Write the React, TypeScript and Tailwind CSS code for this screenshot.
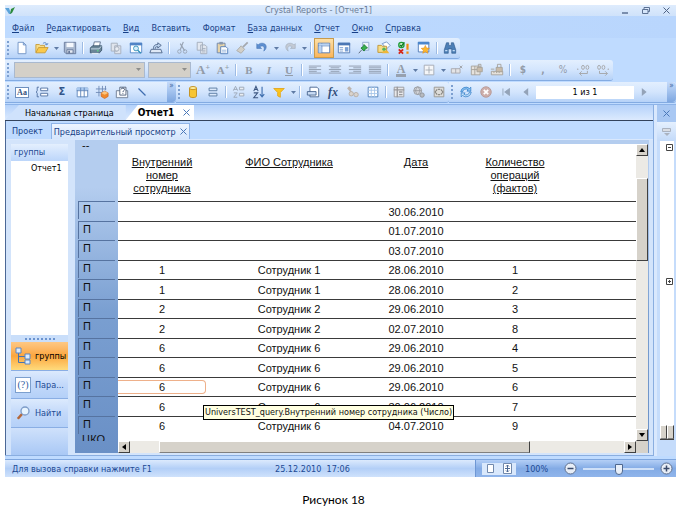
import { ReactNode } from 'react';

const MENU = ['Файл', 'Редактировать', 'Вид', 'Вставить', 'Формат', 'База данных', 'Отчет', 'Окно', 'Справка'];

const ROWS: string[][] = [
  ['', '', '30.06.2010', ''],
  ['', '', '01.07.2010', ''],
  ['', '', '03.07.2010', ''],
  ['1', 'Сотрудник 1', '28.06.2010', '1'],
  ['1', 'Сотрудник 1', '28.06.2010', '2'],
  ['2', 'Сотрудник 2', '29.06.2010', '3'],
  ['2', 'Сотрудник 2', '02.07.2010', '8'],
  ['6', 'Сотрудник 6', '29.06.2010', '4'],
  ['6', 'Сотрудник 6', '29.06.2010', '5'],
  ['6', 'Сотрудник 6', '29.06.2010', '6'],
  ['6', 'Сотрудник 6', '30.06.2010', '7'],
  ['6', 'Сотрудник 6', '04.07.2010', '9'],
];
const SELECTED_ROW = 9;
const TOOLTIP_ROW = 10;

const page = <path d="M3.5 1.5h6l3 3v10h-9z M9.5 1.5v3h3" fill="#fff" stroke="#6a8fc4" />;
const lines = (widths: number[][], color: string) =>
  widths.map(([x, w], i) => <path key={i} d={`M${x} ${3.5 + i * 2}h${w}`} stroke={color} />);

const ICONS: Record<string, ReactNode> = {
  new: page,
  open: <><path d="M1 13V4h4l1 1h5v3" fill="#f7dc86" stroke="#c79a35" /><path d="M1 13.5L4 7.500h11l-3.500 6z" fill="#fbc94b" stroke="#c79a35" /><path d="M9 3c2-2 4-1 4.500 1M14.800 2.500l-1.200 2-2-1" fill="none" stroke="#4a7cc0" /></>,
  save: <><path d="M1.500 1.500h13v13h-11l-2-2z" fill="#a9b8cf" stroke="#66789a" /><path d="M4 2h8v5H4z" fill="#f5f8fd" /><path d="M4.500 10h7v4h-7z" fill="#e5eaf2" stroke="#66789a" /><path d="M6 11h2v3H6z" fill="#66789a" /></>,
  print: <><path d="M5 6l1-5h7l-1 5" fill="#fff" stroke="#5a6e8c" /><path d="M1.500 8l2.500-2.500h10.500v5L12 13.500H1.500z" fill="#6a8698" stroke="#39536c" /><path d="M2 9h9.500l2.500-3" stroke="#cfe0ee" fill="none" /><path d="M3 13.500h8v1.500H3z" fill="#dfe9f3" /><circle cx="10" cy="11" r="1" fill="#5fd08a" /></>,
  setup: <><path d="M2.500 2.500h7v9h-7z M6.500 5.500h7v9h-7z" fill="#dfe4ec" stroke="#a4adba" /><circle cx="9" cy="9" r="2.500" fill="#e9edf3" stroke="#a4adba" /></>,
  preview: <><path d="M1.500 2.500h13v11h-13z" fill="#fff" stroke="#4f83c6" /><path d="M1 2h14v3H1z" fill="#4f83c6" /><circle cx="8" cy="8.500" r="2.800" fill="#d7eefc" stroke="#2f8fb8" /><path d="M10 10.500l3.500 3.500" stroke="#2f8fb8" strokeWidth="1.500" /></>,
  export: <><path d="M2.500 9.500h11l1.500 4H1z" fill="#dfe9f6" stroke="#4a6288" /><path d="M5 9c0-4 2-5 5-5V2l4 3-4 3V6.500c-2 0-3 .5-3 2.500" fill="#bcd3ee" stroke="#4a6288" /></>,
  cut: <><path d="M9.500 1L6 10M6 3l5 8" stroke="#97a2b2" strokeWidth="1.300" /><circle cx="5" cy="12" r="2" fill="none" stroke="#97a2b2" /><circle cx="11.500" cy="12" r="2" fill="none" stroke="#97a2b2" /></>,
  copy: <path d="M2.500 1.500h6v9h-6z M6.500 4.500h5l2 2v8h-7z M8 8.500h4M8 10.500h4M8 12.500h4" fill="#e3e8f0" stroke="#a1acba" />,
  paste: <><path d="M2.500 2.500h9v11h-9z" fill="#e6d3a8" stroke="#6b84ab" /><path d="M5 1h4v3H5z" fill="#8797ae" /><path d="M6.500 6.500h6l2 2v6h-8z" fill="#fff" stroke="#4d79b7" /><path d="M8 10.500h5M8 12.500h5" stroke="#8fb0da" /></>,
  brush: <><path d="M14.500 1.500L9 7" stroke="#a4a8ae" strokeWidth="2" /><path d="M7 5.500l4 4-4 4.500-5-3z" fill="#d2cfc8" stroke="#a9a9a6" /></>,
  undo: <path d="M2 3v5.500h5.500L5.500 6.700c3-2.400 6.500-.2 4.500 4.800 4.500-3 3.500-9-2-9-2 0-3.300.8-4.500 2z" fill="#5e8fd0" stroke="#3f70b3" strokeWidth=".6" />,
  redo: <path d="M14 3v5.500H8.500l2-1.800c-3-2.400-6.500-.2-4.500 4.800-4.500-3-3.500-9 2-9 2 0 3.300.8 4.500 2z" fill="#c3cad5" stroke="#9ba6b5" strokeWidth=".6" />,
  design: <><path d="M1.500 2.500h13v11h-13z" fill="#fff" stroke="#4b76b4" /><path d="M1.500 5.500h13M5.500 2.500v11" stroke="#4b76b4" /><path d="M2 3h12v2H2zM2 6h3v7H2z" fill="#b9d3f3" /></>,
  form: <><path d="M1.500 2.500h13v11h-13z" fill="#fff" stroke="#4b76b4" /><path d="M1 2h14v3H1z" fill="#4b76b4" /><path d="M3 7.500h4M3 9.500h4M3 11.500h4" stroke="#7ba0d4" /><path d="M9 7h4v5H9z" fill="#7ba0d4" /></>,
  pin: <><path d="M6.500 1.500h7v9h-7z" fill="#eef4fb" stroke="#8aa6cc" /><path d="M8 4l4 4-2 .5-2 3-3.500-3.500L7.500 6z" fill="#36b24c" stroke="#1d7a31" /><path d="M5.500 10L2 14" stroke="#55606f" /></>,
  group: <><path d="M6 3l5-2 4 4-4 4z" fill="#fff" stroke="#6a8fc4" /><path d="M1 5h4l1 1h5v7H1z" fill="#f6dc84" stroke="#bf9430" /><circle cx="8" cy="9.500" r="2" fill="#56b45c" /><path d="M6 14h8l-2-3H7z" fill="#efb738" /></>,
  check: <><path d="M5 1.500a3 3 0 110 6 3 3 0 010-6z" fill="#d7f3d6" stroke="#1c9b36" strokeWidth="1.500" /><path d="M3.500 4.500L5 6l3.500-4.500" fill="none" stroke="#0f7a25" strokeWidth="1.500" /><path d="M2 9.500l5 5M7 9.500l-5 5" stroke="#d4281c" strokeWidth="2" /><path d="M12 3v7M12 12v2.500" stroke="#ef8c12" strokeWidth="2.500" /></>,
  star: <><path d="M1.500 1.500h12v11h-12z" fill="#fff" stroke="#4b76b4" /><path d="M1 1h13v3H1z" fill="#4b86cc" /><path d="M9.500 5l1.400 3 3.300.4-2.400 2.200.6 3.400-2.900-1.600L6.600 14l.6-3.400L4.800 8.400 8.100 8z" fill="#fdb72d" stroke="#e08710" strokeWidth=".6" /></>,
  find: <><path d="M4 2h2.500v3h3V2H12l2.500 8v4H10V9H6v5H1.500v-4z" fill="#4d7fb6" stroke="#2b5688" strokeWidth=".7" /><path d="M2.500 11h2.500M11 11h2.500" stroke="#c3dcf5" strokeWidth="1.500" /></>,
  alignLeft: lines([[1, 14], [1, 9], [1, 14], [1, 9], [1, 14]], '#8b97a8'),
  alignCenter: lines([[1, 14], [3, 10], [1, 14], [3, 10], [1, 14]], '#8b97a8'),
  alignRight: lines([[1, 14], [6, 9], [1, 14], [6, 9], [1, 14]], '#8b97a8'),
  justify: lines([[1, 14], [1, 14], [1, 14], [1, 14], [1, 14]], '#8b97a8'),
  border: <><path d="M2.500 2.500h11v11h-11z" fill="#f5f6f8" stroke="#a2a8b1" /><path d="M8 4v8M4 8h8" stroke="#a2a8b1" /></>,
  suppress: <><path d="M1.500 6.500h10v5h-10z M6.500 6.500v5" fill="#e4e4e6" stroke="#a6a6aa" /><path d="M11 3l3 3M14 3l-3 3" stroke="#9a9a9e" /></>,
  lock: <><path d="M1.500 3.500h10v10h-10z M1.500 7.500h10M5.500 3.500v10" fill="#e6e2dc" stroke="#a5a098" /><path d="M8 5h6v5H8z" fill="#c9bba9" stroke="#a5a098" /><path d="M9.500 5V1.500h3V5" fill="none" stroke="#a5a098" /></>,
  lockSize: <><path d="M1.500 9.500h13v4h-13z M4.500 9.500v2M7.500 9.500v2M10.500 9.500v2" fill="#e6e2dc" stroke="#a5a098" /><path d="M7 5h7v5H7z" fill="#c9bba9" stroke="#a5a098" /><path d="M8.500 5V1.500h4V5M1 7h4" fill="none" stroke="#a5a098" /></>,
  incDec: <><circle cx="2" cy="7" r=".8" fill="#a2a2a4" /><ellipse cx="8" cy="5" rx="1.600" ry="2.300" stroke="#a2a2a4" /><ellipse cx="13" cy="5" rx="1.600" ry="2.300" stroke="#a2a2a4" /><path d="M4 12h9M6.500 9.500L4 12l2.500 2.500M13 9v3" stroke="#a2a2a4" /></>,
  decDec: <><circle cx="14" cy="7" r=".8" fill="#a2a2a4" /><ellipse cx="3.500" cy="5" rx="1.600" ry="2.300" stroke="#a2a2a4" /><ellipse cx="8.500" cy="5" rx="1.600" ry="2.300" stroke="#a2a2a4" /><path d="M4 12h9M10.500 9.500L13 12l-2.500 2.500M4 9v3" stroke="#a2a2a4" /></>,
  section: <><path d="M6.500 3.500h8v3h-8z M6.500 9.500h8v3h-8z" fill="#fff" stroke="#4a6c9e" /><path d="M4.500 2.500h-2v4l-1 1.500 1 1.500v4h2" fill="none" stroke="#4a6c9e" /></>,
  crosstab: <><path d="M2.500 3.500h12v10h-12z" fill="#fff" stroke="#5a82b8" /><path d="M2 3h13v3H2z" fill="#a9c8ee" /><path d="M6.500 3v11M10.500 3v11M2 6.500h13" stroke="#5a82b8" /></>,
  olap: <><path d="M1 4.500h12M1 8.500h12M4.500 1v12M8.500 1v12M12 1v5" stroke="#6c87b4" /><path d="M7 9l4-2 4 2v4l-4 2.500L7 13z" fill="#f08a2c" stroke="#c8611a" strokeWidth=".7" /><path d="M7 9l4 2 4-2-4-2z" fill="#fbc47c" /></>,
  subreport: <><path d="M1.500 6.500h13v8h-13z" fill="#f5f8fc" stroke="#69788f" /><path d="M5.500 2.500h7v9h-7z" fill="#fff" stroke="#4b5c76" /><path d="M7 5c0-2 4-2 4 0 0 1.500-2 1.500-2 3M9 9v1" stroke="#2f4262" fill="none" /></>,
  line: <path d="M4 4l8 8" stroke="#3f6db0" strokeWidth="1.500" />,
  db: <><path d="M4 3.500v9c0 2.500 8 2.500 8 0v-9" fill="#f7c533" stroke="#c08a16" /><ellipse cx="8" cy="3.500" rx="4" ry="1.800" fill="#fdec9e" stroke="#c08a16" /></>,
  bands: <path d="M3.500 3.500h9v3h-9z M3.500 9.500h9v3h-9z" fill="#dce9fa" stroke="#55779f" />,
  refresh: <><path d="M2 8a6 6 0 0110-4l1.500-1.500V7H9l1.500-1.500A4 4 0 004 8z" fill="#8bc4f2" stroke="#2d78c4" strokeWidth=".8" /><path d="M14 8a6 6 0 01-10 4l-1.500 1.500V9H7l-1.500 1.500A4 4 0 0012 8z" fill="#c3e2fa" stroke="#2d78c4" strokeWidth=".8" /></>,
  stop: <><circle cx="8" cy="8" r="6" fill="#cdaeaa" stroke="#b59793" /><path d="M5.500 5.500l5 5M10.500 5.500l-5 5" stroke="#fff" strokeWidth="2" /></>,
  first: <path d="M4.500 4v8M12 4L6.500 8l5.500 4z" fill="#94a3b8" stroke="#94a3b8" />,
  prev: <path d="M10.500 3.500L5 8l5.500 4.500z" fill="#94a3b8" />,
  next: <path d="M5.500 3.500L11 8l-5.500 4.500z" fill="#94a3b8" />,
  groupSort: <><path d="M1.500 6.500L4 1.500l2.500 5M2 5h4M2 9h4l-4 5h4" stroke="#9aa5b4" fill="none" /><path d="M8.500 2.500h5v3h-5z M8.500 9.500h5v3h-5z" fill="#e9edf2" stroke="#9aa5b4" /></>,
  sort: <><path d="M2 7l2.500-5.500L7 7M3 5h3.500M2 9h4.500L2 14.500h5" stroke="#3c5680" fill="none" strokeWidth="1.200" /><path d="M11.500 2v11M9 10.500l2.500 3 2.500-3" stroke="#3f6fae" fill="none" strokeWidth="1.300" /></>,
  filter: <path d="M2 4h12l-4.500 4.500V14l-3-1.500v-4z" fill="#fcc51d" stroke="#e0a51c" />,
  template: <><path d="M4.500 2.500h8l2 2v9h-10z" fill="#fff" stroke="#44618d" /><path d="M1.500 7.500h10v4h-10z" fill="#cadcf4" stroke="#44618d" /></>,
  highlight: <><path d="M2 3l4 5M3 2l3 3" stroke="#bdb4ad" strokeWidth="2" /><circle cx="6" cy="10" r="2.500" fill="#d9d3cd" stroke="#b3aca5" /><circle cx="11.500" cy="11" r="2.500" fill="#d9d3cd" stroke="#b3aca5" /></>,
  chart: <><path d="M2.500 2.500h11v11h-11z" fill="#fff" stroke="#4778b5" /><path d="M2 6h12M2 9.800h12M6 2v12M9.800 2v12" stroke="#a2c4e8" /></>,
  grid: <><path d="M2.500 2.500h11v11h-11z" fill="#e8e8ea" stroke="#98989c" /><path d="M2 5.500h12M6 2v12M8 8h4M8 11h4" stroke="#98989c" strokeWidth="1.500" /></>,
  globe: <><circle cx="6.500" cy="6.500" r="4.500" fill="#d4d6da" stroke="#96999f" /><path d="M2 6.500h9M6.500 2c-3 3-3 6 0 9 3-3 3-6 0-9" stroke="#96999f" fill="none" /><circle cx="11.500" cy="11.500" r="2.500" fill="#b7babf" stroke="#8d9096" /></>,
  map: <><path d="M2.500 2.500h11v11h-11z" fill="#dddcd9" stroke="#97958f" /><path d="M6 5L3.500 8 6 11M10 5l2.500 3L10 11M7 5h2M7 11h2" stroke="#85837e" fill="none" strokeWidth="1.200" /></>,
};

function Icon({ name }: { name: string }) {
  return <svg viewBox="0 0 16 16" fill="none" className="size-[14px]" aria-hidden="true">{ICONS[name]}</svg>;
}

const GLYPHS: Record<string, ReactNode> = {
  grow: <span className="font-['Liberation_Serif',serif] text-[13px] font-bold">A<sup className="text-[8px]">+</sup></span>,
  shrink: <span className="font-['Liberation_Serif',serif] text-[11px] font-bold">A<sup className="text-[8px]">+</sup></span>,
  bold: <b className="font-['Liberation_Serif',serif] text-[11px]">B</b>,
  italic: <i className="font-['Liberation_Serif',serif] text-[11px] font-bold">I</i>,
  underline: <u className="font-['Liberation_Serif',serif] text-[11px] font-bold">U</u>,
  color: <span className="border-b-[3px] border-[#97a1b0] px-px font-['Liberation_Serif',serif] text-[12px] leading-[10px] font-bold">A</span>,
  dollar: <b className="text-[10px]">$</b>,
  comma: <b className="text-[10px]">,</b>,
  percent: <span className="text-[10px]">%</span>,
  text: <span className="border border-[#6d8fbe] bg-white px-px font-['Liberation_Serif',serif] text-[8px] leading-[9px] font-bold text-[#33507c]">Aa</span>,
  sum: <b className="text-[11px] text-[#33558a]">Σ</b>,
  fx: <i className="font-['Liberation_Serif',serif] text-[12px] font-bold text-[#33507c]">fx</i>,
};

function Tools({ items }: { items: string[] }) {
  return (
    <>
      {items.map((item, i) => {
        if (item === '|') return <span key={i} className="mx-[2px] h-3 w-[2px] shrink-0 border-r border-white bg-[#9dbbe4]" />;
        if (item === 'v') {
          return (
            <button key={i} aria-label="Список" className="flex h-5 w-2 shrink-0 items-center justify-center">
              <svg viewBox="0 0 5 3" className="w-[5px]"><path d="M0 0h5L2.500 3z" fill="#5f7ba5" /></svg>
            </button>
          );
        }
        return (
          <button key={i} aria-label={item}
            className={`flex size-5 shrink-0 items-center justify-center text-[#929ba8] ${item === 'design' ? 'border border-[#c89b4d] bg-gradient-to-b from-[#fde0a6] to-[#fbb55a]' : ''}`}>
            {GLYPHS[item] ?? <Icon name={item} />}
          </button>
        );
      })}
    </>
  );
}

function Grip() {
  return <span className="mr-[3px] ml-[2px] h-[14px] w-[2px] shrink-0 border-l-2 border-dotted border-[#7c9fd0]" />;
}

function Overflow() {
  return (
    <span className="flex h-full w-[9px] shrink-0 items-start justify-center rounded-r-sm bg-gradient-to-b from-[#c4dafa] to-[#7ea7e0] text-[8px] leading-[8px] text-[#3d64a0]">»</span>
  );
}

const BAR = 'flex h-[21px] items-center rounded-r-[3px] border-b border-[#83abe2] bg-gradient-to-b from-[#e3effe] via-[#d3e5fd] to-[#b6d2f8]';
const SCROLL_BTN = 'flex size-3 shrink-0 items-center justify-center border border-t-white border-l-white border-r-[#404040] border-b-[#404040] bg-[#d6d2ca]';

function Toolbars() {
  return (
    <div className="flex flex-col items-start gap-px pb-px">
      <div className={BAR}>
        <Grip />
        <Tools items={['new', 'open', 'v', 'save', '|', 'print', 'setup', 'preview', 'export', '|', 'cut', 'copy', 'paste', 'brush', 'undo', 'v', 'redo', 'v', '|', 'design', 'form', 'pin', 'group', 'check', 'star', '|', 'find']} />
      </div>
      <div className={BAR}>
        <Grip />
        <div className="flex gap-[3px] px-[2px]">
          <FontSelect label="Шрифт" className="w-[131px]" />
          <FontSelect label="Размер" className="w-[43px]" />
        </div>
        <Tools items={['grow', 'shrink', '|', 'bold', 'italic', 'underline', '|', 'alignLeft', 'alignCenter', 'alignRight', 'justify', '|', 'color', 'v', 'border', 'v', 'suppress', 'lock', 'lockSize', '|', 'dollar', 'comma', 'percent', 'incDec', 'decDec']} />
      </div>
      <div className="flex w-full">
        <div className={`${BAR} w-[171px]`}>
          <Grip />
          <Tools items={['text', 'section', 'sum', 'crosstab', 'olap', 'subreport', 'line']} />
          <span className="flex-1" />
          <Overflow />
        </div>
        <div className={BAR}>
          <Grip />
          <Tools items={['db', 'bands', '|', 'groupSort', 'sort', 'filter', 'v', '|', 'template', 'fx', 'highlight', 'chart', '|', 'grid', 'globe', 'map']} />
        </div>
        <div className={`${BAR} flex-1`}>
          <Grip />
          <Tools items={['refresh', 'stop', 'first', 'prev']} />
          <input aria-label="Страница" defaultValue="1 из 1" className="h-[13px] w-[98px] bg-white text-center text-[9px] text-black" />
          <Tools items={['next']} />
          <span className="flex-1" />
          <Overflow />
        </div>
      </div>
    </div>
  );
}

function FontSelect({ label, className }: { label: string; className: string }) {
  return (
    <div className={`relative ${className}`}>
      <select aria-label={label} disabled className="block h-4 w-full appearance-none border border-[#a9b9cf] bg-[#d4d0c8] opacity-100" />
      <svg viewBox="0 0 5 3" className="absolute top-[6px] right-1 w-[5px]"><path d="M0 0h5L2.500 3z" fill="#8d8d8a" /></svg>
    </div>
  );
}

function Sidebar() {
  return (
    <aside className="mt-1 flex w-[57px] shrink-0 flex-col">
      <div className="flex flex-1 flex-col bg-white">
        <div className="h-[17px] bg-gradient-to-b from-[#e4effe] to-[#bcd6fa] pl-[3px] leading-[17px] text-[#1d4a94]">группы</div>
        <div className="pl-5 leading-[14px] text-black">Отчет1</div>
      </div>
      <div className="flex h-[7px] items-center justify-center bg-[#c9defa]">
        <span className="w-[30px] border-t-2 border-dotted border-[#6b93cf]" />
      </div>
      <button className="flex h-[29px] items-center gap-1 border-b border-[#8aaee4] bg-gradient-to-b from-[#fdc884] via-[#fba63c] to-[#fedb7c] pl-1 text-black">
        <svg viewBox="0 0 16 18" className="w-4 shrink-0">
          <path d="M3.500 5v10.500h7M3.500 9.500h7" stroke="#4a73ad" fill="none" />
          <path d="M1 1h5v5H1zM10 7h5v5h-5zM10 13h5v4h-5z" fill="#dcebfc" stroke="#5b86c2" />
        </svg>
        группы
      </button>
      <button className="flex h-7 items-center gap-1 border-b border-[#8aaee4] bg-gradient-to-b from-[#dceafd] via-[#c3d9fa] to-[#b4d0f8] pl-1 text-[#1d4a94]">
        <span className="flex size-4 shrink-0 items-center justify-center border border-[#7c9fce] bg-white font-['Liberation_Serif',serif] text-[10px] text-[#2d5d9f]">(?)</span>
        Пара...
      </button>
      <button className="flex h-[29px] items-center gap-1 border-b border-[#8aaee4] bg-gradient-to-b from-[#dceafd] via-[#c3d9fa] to-[#b4d0f8] pl-1 text-[#1d4a94]">
        <svg viewBox="0 0 16 16" className="w-4 shrink-0">
          <path d="M7 9l-3.500 4" stroke="#b5683a" strokeWidth="2.500" strokeLinecap="round" />
          <circle cx="10" cy="6" r="4" fill="#e7f4ff" stroke="#7d9cc8" strokeWidth="1.300" />
        </svg>
        Найти
      </button>
      <div className="h-[27px] bg-gradient-to-b from-[#cfe1fb] to-[#a9c8f5]" />
    </aside>
  );
}

function Report() {
  return (
    <div className="mb-[2px] flex min-w-0 flex-1 flex-col bg-gradient-to-b from-[#b4cdef] from-15% via-[#7a9fd1] via-55% to-[#6a90c6] pt-1">
      <div className="flex pr-px">
        <table className="w-full table-fixed border-separate border-spacing-0 text-center font-['Liberation_Sans',sans-serif] text-[11px] leading-[13px] text-[#111]">
          <colgroup>
            <col className="w-[43px]" />
            <col className="w-[88px]" />
            <col className="w-[166px]" />
            <col className="w-[88px]" />
            <col className="w-[110px]" />
            <col />
          </colgroup>
          <thead>
            <tr className="h-[57px] align-top">
              <td className="p-0 pl-[7px] text-left leading-[3px]">--</td>
              <th className="bg-white px-1 pt-3 font-normal underline">Внутренний номер сотрудника</th>
              <th className="bg-white pt-3 font-normal underline">ФИО Сотрудника</th>
              <th className="bg-white pt-3 font-normal underline">Дата</th>
              <th className="bg-white px-5 pt-3 font-normal underline">Количество операций (фактов)</th>
              <td className="bg-white" />
            </tr>
          </thead>
          <tbody>
            {ROWS.map((row, i) => (
              <tr key={i} className="odd:h-5 even:h-[19px]">
                <td className="p-0 px-[3px] align-top">
                  <div className="h-[18px] border-t border-l border-[#5673a0] pl-1 text-left leading-[15px]">П</div>
                </td>
                {row.map((cell, j) => (
                  <td key={j} className="relative border-t border-[#3a3a3a] bg-white p-0 pt-px">
                    {cell}
                    {i === SELECTED_ROW && j === 0 && (
                      <span className="absolute inset-x-0 inset-y-[2px] rounded-r-[4px] border border-l-0 border-[#eeb08a]" />
                    )}
                    {i === TOOLTIP_ROW && j === 0 && (
                      <span className="absolute top-[8px] left-[85px] z-10 border border-black bg-[#ffffe1] px-px font-['DejaVu_Sans_Condensed','DejaVu_Sans',sans-serif] text-[9px] leading-[13px] whitespace-nowrap">
                        UniversTEST_query.Внутренний номер сотрудника (Число)
                      </span>
                    )}
                  </td>
                ))}
                <td className="border-t border-[#3a3a3a] bg-white p-0" />
              </tr>
            ))}
            <tr>
              <td className="p-0"><div className="h-[6px] overflow-hidden pl-[7px] text-left leading-[9px]">ЦКО</div></td>
              <td colSpan={5} className="bg-white p-0" />
            </tr>
          </tbody>
        </table>
        <div className="flex w-3 shrink-0 flex-col bg-[#eceae5]">
          <button aria-label="Вверх" className={SCROLL_BTN}><svg viewBox="0 0 6 4" className="w-[6px]"><path d="M0 4h6L3 0z" /></svg></button>
          <div className="mt-[22px] h-[83px] border border-t-white border-l-white border-r-[#404040] border-b-[#404040] bg-[#d6d2ca]" />
          <span className="flex-1" />
          <button aria-label="Вниз" className={SCROLL_BTN}><svg viewBox="0 0 6 4" className="w-[6px]"><path d="M0 0h6L3 4z" /></svg></button>
        </div>
      </div>
      <div className="flex h-3 pr-px pl-[43px]">
        <div className="flex flex-1 bg-[#eceae5]">
          <button aria-label="Влево" className={SCROLL_BTN}><svg viewBox="0 0 4 6" className="w-1"><path d="M4 0v6L0 3z" /></svg></button>
          <div className="ml-[29px] w-[371px] border border-t-white border-l-white border-r-[#404040] border-b-[#808080] bg-[#d6d2ca]" />
          <span className="flex-1" />
          <button aria-label="Вправо" className={SCROLL_BTN}><svg viewBox="0 0 4 6" className="w-1"><path d="M0 0v6l4-3z" /></svg></button>
        </div>
        <div className="w-3 bg-[#d6d2ca]" />
      </div>
    </div>
  );
}

function Cross({ className = 'text-[#4b78b8]' }: { className?: string }) {
  return <svg viewBox="0 0 7 7" className={`w-[7px] shrink-0 ${className}`}><path d="M.5.5l6 6M6.500.5l-6 6" stroke="currentColor" /></svg>;
}

function TreeBox({ open }: { open?: boolean }) {
  return (
    <svg viewBox="0 0 7 7" className="w-[7px]">
      <path d={open ? 'M.5.5h6v6h-6zM2 3.500h3' : 'M.5.5h6v6h-6zM2 3.500h3M3.500 2v3'} fill="#fff" stroke="#444" />
    </svg>
  );
}

function RightRail() {
  return (
    <div className="flex w-[19px] shrink-0 flex-col bg-[#c5dcfb]">
      <button aria-label="Закрыть панель" className="flex h-[17px] items-center justify-center bg-[#a9c8f3]"><Cross /></button>
      <div className="flex h-[19px] items-center justify-center bg-gradient-to-b from-[#e5f0fe] to-[#c3daf9]">
        <svg viewBox="0 0 9 10" className="w-[9px]"><path d="M.5 1.500h8v3h-8z" fill="#dadde3" stroke="#aab2bf" /><path d="M2 6h6L5 9z" fill="#aab2bf" /></svg>
      </div>
      <div className="mr-[2px] ml-[3px] flex flex-1 flex-col bg-white">
        <div className="flex flex-1 flex-col items-end pt-[3px] pr-px">
          <TreeBox open />
          <span className="h-[127px]" />
          <TreeBox />
        </div>
        <div className="flex h-[15px] border-b border-[#404040]">
          <span className="flex-1 border border-t-white border-l-white border-r-[#404040] border-b-[#808080] bg-[#d6d2ca]" />
          <span className="flex-1 border border-t-white border-l-white border-r-[#404040] border-b-[#808080] bg-[#d6d2ca]" />
        </div>
      </div>
      <div className="h-[16px]" />
    </div>
  );
}

function StatusBar() {
  return (
    <footer className="flex h-[18px] items-center border-t border-[#7ea6de] bg-gradient-to-b from-[#dceafd] via-[#b3cff7] to-[#cfe2fc] text-[#1d4a94]">
      <span className="flex-1 pl-[7px]">Для вызова справки нажмите F1</span>
      <span className="flex-1 pl-[63px] whitespace-pre">25.12.2010  17:06</span>
      <div className="flex h-full w-[201px] items-center border-l border-[#6e97d4] bg-gradient-to-b from-[#b4cff6] via-[#83abe5] to-[#90b5eb] pl-[6px]">
        <span className="flex h-3 w-[34px] shrink-0 items-center justify-around bg-[#d9e8fc]">
          <svg viewBox="0 0 7 9" className="w-[7px]"><path d="M.5.5h6v8h-6z" fill="#fff" stroke="#7189ad" /></svg>
          <svg viewBox="0 0 9 11" className="w-[9px]"><path d="M.5.5h8v10h-8z" fill="#fff" stroke="#7189ad" /><path d="M4.500 2v7M2 5.500h5M3 3.500l1.500-1.500L6 3.500M3 7.500L4.500 9 6 7.500" stroke="#4c6894" fill="none" /></svg>
        </span>
        <span className="w-[48px] shrink-0 pl-[9px]">100%</span>
        <button aria-label="Уменьшить" className="shrink-0">
          <svg viewBox="0 0 13 13" className="w-[13px]"><circle cx="6.500" cy="6.500" r="5.500" fill="#e8eef7" stroke="#5d6f8f" /><path d="M3.500 6.500h6" stroke="#39496a" strokeWidth="1.500" /></svg>
        </button>
        <input type="range" aria-label="Масштаб" defaultValue="50"
          className="mx-[6px] h-3 w-0 flex-1 appearance-none bg-transparent [&::-webkit-slider-runnable-track]:h-[2px] [&::-webkit-slider-runnable-track]:bg-[#cfe0f8] [&::-webkit-slider-thumb]:-mt-1 [&::-webkit-slider-thumb]:h-[11px] [&::-webkit-slider-thumb]:w-[8px] [&::-webkit-slider-thumb]:appearance-none [&::-webkit-slider-thumb]:rounded-b-[4px] [&::-webkit-slider-thumb]:border [&::-webkit-slider-thumb]:border-[#4f688f] [&::-webkit-slider-thumb]:bg-[#e8eff9]" />
        <button aria-label="Увеличить" className="mr-[3px] shrink-0">
          <svg viewBox="0 0 13 13" className="w-[13px]"><circle cx="6.500" cy="6.500" r="5.500" fill="#e8eef7" stroke="#5d6f8f" /><path d="M3.500 6.500h6M6.500 3.500v6" stroke="#39496a" strokeWidth="1.500" /></svg>
        </button>
      </div>
    </footer>
  );
}

export default function App() {
  return (
    <div className="min-h-screen bg-white pt-[5px] pr-[6px] pl-[5px]">
      <div className="bg-[#bfdbff] font-['DejaVu_Sans_Condensed','DejaVu_Sans',sans-serif] text-[9px] leading-[12px]">
        {/* Title */}
        <header className="flex h-[11px] items-center bg-gradient-to-b from-[#dfecfd] to-[#cfe2fa] text-[#6b7c96]">
          <svg viewBox="0 0 10 8" className="w-[10px] shrink-0"><path d="M0 1h4l2 6H4z" fill="#5ba3d9" /><path d="M5 7l1-5 4-2-3 6z" fill="#2b8a3b" /></svg>
          <h1 className="flex-1 text-center leading-[9px]">Crystal Reports - [Отчет1]</h1>
          <div className="flex w-[54px] justify-between pr-[6px]">
            <button aria-label="Свернуть"><svg viewBox="0 0 7 7" className="w-[7px]"><path d="M0 6h6" stroke="#5d7294" strokeWidth="1.500" /></svg></button>
            <button aria-label="Восстановить"><svg viewBox="0 0 8 7" className="w-2"><path d="M2 2.500V.5h5.500v4H6M.5 2.500H6v4H.5z" fill="none" stroke="#5d7294" /></svg></button>
            <button aria-label="Закрыть"><Cross className="text-[#4f6384]" /></button>
          </div>
        </header>

        {/* Menu */}
        <nav className="flex h-[22px] items-center gap-3 bg-gradient-to-r from-[#bfdbff] to-[#b9d6fd] pt-[2px] pl-[7px] text-[#173f86]">
          {MENU.map(item => (
            <button key={item} className="whitespace-nowrap">
              {item === 'Вставить' || item === 'Формат' ? item : <><u>{item[0]}</u>{item.slice(1)}</>}
            </button>
          ))}
        </nav>

        <Toolbars />

        <div className="flex border-t border-[#8db3e8]">
          <main className="min-w-0 flex-1 border-r border-b border-[#8aaee0] bg-[#bfdbff]">
            {/* Document tabs */}
            <div className="flex h-4 border-b border-[#33435c] bg-gradient-to-b from-[#b5d2fa] to-[#dceafe] text-black">
              <button className="h-full bg-[#cfe2fc] pr-3 pl-5 [clip-path:polygon(0_100%,14px_0,100%_0,100%_100%)]">Начальная страница</button>
              <button className="flex h-full items-center gap-[9px] bg-white pr-1 pl-3 text-[10px] font-bold [clip-path:polygon(0_100%,12px_0,100%_0,100%_100%)]">Отчет1 <Cross /></button>
            </div>
            <div className="border-l border-[#4a6796]">
              {/* View tabs */}
              <div className="flex h-[18px] items-end pl-[6px] text-[#173f86]">
                <button className="h-4 pr-2">Проект</button>
                <button className="flex h-4 items-center gap-1 border border-b-0 border-[#8fb4e8] bg-gradient-to-b from-[#eef5ff] to-[#d5e6fd] px-[2px] whitespace-nowrap">Предварительный просмотр <Cross /></button>
              </div>
              <div className="flex gap-[7px] border-t border-[#d9e8fd] bg-[#d3e4fb] pr-1 pl-[5px]">
                <Sidebar />
                <Report />
              </div>
            </div>
          </main>
          <span className="w-[3px] bg-[#d9e8fd]" />
          <RightRail />
        </div>

        <div className="pt-[3px]">
          <StatusBar />
        </div>
      </div>
      <p className="mt-4 pr-[14px] text-center font-['Lato','Open_Sans',sans-serif] text-[12px] leading-[14px] text-black">Рисунок 18</p>
    </div>
  );
}
